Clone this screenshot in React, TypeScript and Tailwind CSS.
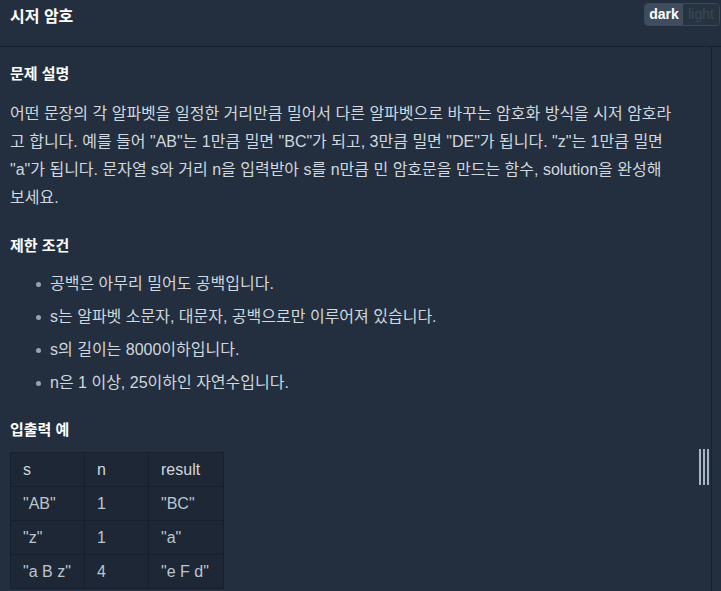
const rows = [
  ['"AB"', "1", '"BC"'],
  ['"z"', "1", '"a"'],
  ['"a B z"', "4", '"e F d"'],
];

const limits = [
  "공백은 아무리 밀어도 공백입니다.",
  "s는 알파벳 소문자, 대문자, 공백으로만 이루어져 있습니다.",
  "s의 길이는 8000이하입니다.",
  "n은 1 이상, 25이하인 자연수입니다.",
];

export default function App() {
  return (
    <div
      className="relative w-[721px] h-[591px] overflow-hidden bg-[#232f3e] text-[#d0d7de]"
      style={{ fontFamily: '"Liberation Sans", "Noto Sans CJK KR", sans-serif' }}
    >
      {/* header */}
      <div className="h-[47px] flex items-start justify-between border-b border-[#172130]">
        <h1 className="pl-[10px] pt-[5px] text-[16px] font-bold text-white leading-[24px]">시저 암호</h1>
        <div className="mt-[3px] mr-[1px] flex h-[23px] rounded-[4px] border border-[#3b4859] overflow-hidden text-[14px] font-bold leading-[21px]">
          <span className="w-[38px] text-center bg-[#3f4d5e] text-white">dark</span>
          <span className="w-[36px] text-center bg-[#263341] text-[#3c4858] font-normal">light</span>
        </div>
      </div>

      <div className="flex">
        {/* content */}
        <div className="w-[712px] border-r border-[#172130] pl-[10px] pt-[16px] h-[544px]">
          <h2 className="text-[15px] font-bold text-white leading-[22px]">문제 설명</h2>
          <p className="mt-[15px] w-[666px] text-[16px] leading-[28px]">
            어떤 문장의 각 알파벳을 일정한 거리만큼 밀어서 다른 알파벳으로 바꾸는 암호화 방식을 시저 암호라고 합니다. 예를 들어
            "AB"는 1만큼 밀면 "BC"가 되고, 3만큼 밀면 "DE"가 됩니다. "z"는 1만큼 밀면 "a"가 됩니다. 문자열 s와 거리 n을 입력받아
            s를 n만큼 민 암호문을 만드는 함수, solution을 완성해 보세요.
          </p>

          <h2 className="mt-[23px] text-[15px] font-bold text-white leading-[22px]">제한 조건</h2>
          <ul className="mt-[13px] flex flex-col gap-[5px] pl-[26px]">
            {limits.map((t) => (
              <li key={t} className="flex items-center gap-[9px] text-[16px] leading-[28px]">
                <span className="w-[5px] h-[5px] rounded-full bg-[#98a3ae]" />
                {t}
              </li>
            ))}
          </ul>

          <h2 className="mt-[22px] text-[15px] font-bold text-white leading-[22px]">입출력 예</h2>
          <table className="mt-[11px] border-collapse text-[16px] bg-[#1e2735]">
            <thead>
              <tr>
                <th className="w-[74px] h-[34px] border border-[#172030] pl-[12px] text-left font-normal">s</th>
                <th className="w-[64px] h-[34px] border border-[#172030] pl-[12px] text-left font-normal">n</th>
                <th className="w-[75px] h-[34px] border border-[#172030] pl-[12px] text-left font-normal">result</th>
              </tr>
            </thead>
            <tbody>
              {rows.map((r, i) => (
                <tr key={i}>
                  {r.map((c, j) => (
                    <td key={j} className="h-[34px] border border-[#172030] pl-[12px] text-[#bcc5ce]">
                      {c}
                    </td>
                  ))}
                </tr>
              ))}
            </tbody>
          </table>
        </div>
        <div className="flex-1" />
      </div>

      {/* resize handle */}
      <div className="absolute left-[699px] top-[449px] flex gap-[2px]">
        <span className="w-[2px] h-[36px] bg-[#a6b6c2]" />
        <span className="w-[2px] h-[36px] bg-[#a6b6c2]" />
        <span className="w-[2px] h-[36px] bg-[#a6b6c2]" />
      </div>
    </div>
  );
}
